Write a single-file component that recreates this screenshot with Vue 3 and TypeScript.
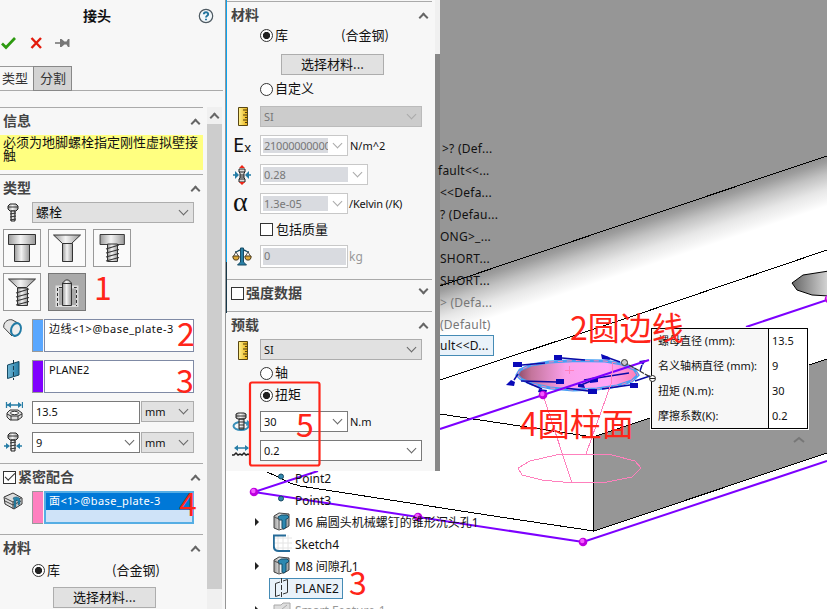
<script setup lang="ts">
interface TreeRow { text: string; dim?: boolean; selected?: boolean; shift?: number }
interface Feature { text: string; icon: string; arrow: boolean }
interface Mark { x: number; y: number; text: string }

const headKinds = ['flat', 'cone', 'flatThread', 'coneThread', 'anchor']

const parts: TreeRow[] = [
  { text: '>? (Def...', shift: 2 },
  { text: 'fault<<...', shift: -2 },
  { text: '<<Defa...' },
  { text: '? (Defau...' },
  { text: 'ONG>_...' },
  { text: 'SHORT...' },
  { text: 'SHORT...' },
  { text: '> (Defa...', dim: true },
  { text: '(Default)', dim: true },
  { text: 'ult<<D...', selected: true },
]

const features: Feature[] = [
  { text: 'Point2', icon: 'point', arrow: false },
  { text: 'Point3', icon: 'point', arrow: false },
  { text: 'M6 扁圆头机械螺钉的锥形沉头孔1', icon: 'hole', arrow: true },
  { text: 'Sketch4', icon: 'sketch', arrow: false },
  { text: 'M8 间隙孔1', icon: 'hole', arrow: true },
  { text: 'PLANE2', icon: 'plane', arrow: false },
  { text: 'Smart Feature-1', icon: 'smart', arrow: true },
]

const callout: [string, string][] = [
  ['螺母直径 (mm):', '13.5'],
  ['名义轴柄直径 (mm):', '9'],
  ['扭矩 (N.m):', '30'],
  ['摩擦系数(K):', '0.2'],
]

const marks: Mark[] = [
  { x: 94, y: 300, text: '1' },
  { x: 177, y: 346, text: '2' },
  { x: 176, y: 393, text: '3' },
  { x: 179, y: 516, text: '4' },
  { x: 296, y: 437, text: '5' },
  { x: 349, y: 595, text: '3' },
  { x: 570, y: 340, text: '2圆边线' },
  { x: 520, y: 436, text: '4圆柱面' },
]

const vertices: [number, number][] = [[254, 492], [418, 517], [583, 542], [543, 395], [829, 299]]
</script>

<template>
  <div class="app">
    <svg class="scene" width="827" height="609" viewBox="0 0 827 609">
      <defs>
        <linearGradient id="fillet" gradientUnits="userSpaceOnUse" x1="630" y1="222" x2="645" y2="267">
          <stop offset="0" stop-color="#929292" /><stop offset=".12" stop-color="#9e9e9e" />
          <stop offset=".35" stop-color="#c2c2c2" /><stop offset=".65" stop-color="#e6e6e6" />
          <stop offset="1" stop-color="#fff" />
        </linearGradient>
        <linearGradient id="pink"><stop offset="0" stop-color="#8c4a66" /><stop offset=".12" stop-color="#c4759c" /><stop offset=".4" stop-color="#fba0ea" /><stop offset=".75" stop-color="#ffa6f8" /><stop offset="1" stop-color="#ff7cb4" /></linearGradient>
        <linearGradient id="bore"><stop offset="0" stop-color="#666" /><stop offset="1" stop-color="#d8d8d8" /></linearGradient>
        <linearGradient id="metal"><stop offset="0" stop-color="#999" /><stop offset=".45" stop-color="#f4f4f4" /><stop offset="1" stop-color="#999" /></linearGradient>
        <linearGradient id="gold"><stop offset="0" stop-color="#fff394" /><stop offset="1" stop-color="#e8ae10" /></linearGradient>
        <linearGradient id="teal"><stop offset="0" stop-color="#71b7d5" /><stop offset="1" stop-color="#247ca5" /></linearGradient>
      </defs>
      <rect width="827" height="609" fill="#fff" />
      <path d="M440 0H827V156L440 286Z" fill="#969696" />
      <path d="M440 286L827 156V250L440 380Z" fill="url(#fillet)" />
      <path d="M593 437L827 359V453L594 531Z" fill="#969696" />
      <g fill="none" stroke="#000" shape-rendering="crispEdges">
        <path d="M440 286L630 222L827 156M440 380L630 317L827 250M440 414L593 437L827 359M593 437L594 531L827 453M267 472L276 476L290 483L300 486L500 517L594 531" />
        <path d="M593.500 437V531" />
      </g>
      <path d="M829 271L803 275L792 283L797 290L812 295L829 296Z" fill="url(#bore)" stroke="#000" />
      <path d="M517 375L520 370L531 365L549 362L577 360.500L605 361L622 364L634 369L638 375L632 381L617 386L597 389L573 390L550 388L532 384L521 379Z" fill="url(#pink)" stroke="#48a0f5" stroke-width="3" />
      <path d="M517 375L520 370L531 365L549 362L577 360.500L605 361L622 364L634 369L638 375L632 381L617 386L597 389L573 390L550 388L532 384L521 379Z" fill="none" stroke="#ff80b8" stroke-dasharray="5 4" />
      <g stroke="#0a0aa6" stroke-width="1.500" fill="#0909b8">
        <path d="M522 365L545 363M562 358L585 360M606 357L620 362M521 381L557 382M584 380L629 373M542 389L526 382M588 391L566 388M630 385L602 389M514 380L518 374M581 385L598 378M642 365L640 371M635 381L650 376" />
        <path d="M513 362h9v5h-9zM554 355h8v5h-8zM601 354l8 3 1 3-8-1zM556 379h8v5h-8zM590 378l8-1v5l-8 1zM511 380l-5 5 8 1 1-4zM588 389h9v5h-9zM539 389l8 1-1 4-8-2zM630 383h8v5h-8zM578 383l6 2 1 3-7-1zM639 361l7-1-3 5z" stroke="none" />
      </g>
      <g fill="none" stroke="#7d00ff" stroke-width="2">
        <path d="M318 471L254 492L418 517L583 542L827 461M440 429L543 395L649 360M746 327L827 300" />
      </g>
      <g fill="none" stroke="#ff80bd" shape-rendering="crispEdges">
        <path d="M543 395L572 483M613 363L611 384L586 454M569 366v8M565 370h9" />
        <path d="M518 468L530 461L556 455L580 454L612 455L635 461L641 468L632 477L607 482L573 483L542 480L522 475Z" />
      </g>
      <g v-for="(v, i) in vertices" :key="i">
        <circle :cx="v[0]" :cy="v[1]" r="4.300" fill="#bd00df" /><circle :cx="v[0] - .7" :cy="v[1] - 1" r="2.200" fill="#f45cff" />
      </g>
      <path d="M624 362L652 378" stroke="#333" stroke-width="1.200" stroke-dasharray="5 1" />
      <circle cx="624.500" cy="362.500" r="3" fill="#ccc" stroke="#333" />
      <path d="M794 442l5-4 5 4" fill="none" stroke="#777" stroke-width="2" />
    </svg>

    <aside class="manager">
      <header class="head">
        <h1>接头</h1>
        <svg class="help" width="16" height="16" viewBox="0 0 16 16"><circle cx="8" cy="8" r="6.700" fill="#f2f7fa" stroke="#4d5961" stroke-width="1.200" /><path d="M5.800 6.200C5.900 3.500 10.200 3.500 10.200 6.200C10.200 7.700 8 7.700 8 9.500M8 10.800v1.500" fill="none" stroke="#22749e" stroke-width="1.900" /></svg>
      </header>
      <div class="actions">
        <svg width="16" height="14" viewBox="0 0 16 14"><path d="M2 7.500L6 11.500L15 2" fill="none" stroke="#2d9a10" stroke-width="2.700" /></svg>
        <svg width="14" height="14" viewBox="0 0 14 14"><path d="M1.500 2L11 12M11 2L1.500 12" stroke="#e31b0c" stroke-width="2.400" /></svg>
        <svg width="16" height="14" viewBox="0 0 16 14"><path d="M0 7h7" stroke="#777" stroke-width="1.600" /><path d="M5 3h1.500l3 2.500h2L13 3h1.500v8H13l-1.500-2.500h-2l-3 2.500H5z" fill="#777" /></svg>
      </div>
      <nav class="tabs"><span class="current">类型</span><span class="other">分割</span></nav>

      <div class="scroller">
        <div class="sections">
          <section>
            <div class="title"><b>信息</b><i class="chev up"></i></div>
            <p class="notice">必须为地脚螺栓指定刚性虚拟壁接触</p>
          </section>

          <section>
            <div class="title"><b>类型</b><i class="chev up"></i></div>
            <div class="row r22">
              <svg class="ic bolt" width="14" height="20" viewBox="0 0 14 20"><path d="M2 3l2-2h6l2 2v3l-2 2H4L2 6z" fill="url(#metal)" stroke="#222" /><path d="M5 8h4v10H5z" fill="url(#metal)" stroke="#222" /><path d="M2 4h10M4 11l6-1M4 14l6-1M4 17l6-1" stroke="#333" /></svg>
              <div class="combo w162 cn"><span>螺栓</span><i class="chev down"></i></div>
            </div>
            <div class="heads">
              <div v-for="k in headKinds" :key="k" :class="['headbtn', { picked: k === 'anchor' }]">
                <svg width="36" height="36" viewBox="0 0 36 36" stroke="#333" fill="url(#metal)">
                  <path v-if="k.startsWith('flat')" d="M4.500 4.500h27v10h-27z" :transform="k === 'flatThread' ? 'translate(2 0) scale(.9 1)' : ''" />
                  <path v-if="k.startsWith('cone')" d="M4.500 5h27l-9 8.500h-9z" />
                  <path v-if="k === 'flat'" d="M10.500 14.500h15v17h-15z" />
                  <path v-if="k === 'cone'" d="M13.500 13.500h10v18h-10z" />
                  <g v-if="k.endsWith('Thread')"><path d="M13.500 14h10v17.500h-10z" /><path d="M12 19l13-4M12 23l13-3.500M12 27l13-3.500M12 31l13-3.500" fill="none" stroke-width="1.200" /></g>
                  <g v-if="k === 'anchor'"><path d="M8 31.500V13h20v18.500z" fill="#ddd" stroke="#ddd" stroke-width="3" /><path d="M10 31V14.500h17V31z" fill="#aaa" stroke="none" /><path d="M8.500 32V13.500h19V32" fill="none" stroke-dasharray="3 2" /><path d="M13.500 31.500V9l3-3h3l3 3v22.500z" /><path d="M13.500 9.500h9" /></g>
                </svg>
              </div>
            </div>
            <div class="row pick first">
              <svg class="ic" width="20" height="20" viewBox="0 0 20 20"><path d="M14 3.500L9 .8C4 0 0 4 .8 8.500L9 17z" fill="#e4e4e4" stroke="#444" /><ellipse cx="13" cy="10.500" rx="4.800" ry="6.500" transform="rotate(18 13 10.500)" fill="#eee" stroke="#227ba5" stroke-width="2" /></svg>
              <span class="swatch blue"></span><div class="field sel">边线&lt;1&gt;@base_plate-3</div>
            </div>
            <div class="row pick">
              <svg class="ic" width="20" height="20" viewBox="0 0 20 20"><path d="M4.500 5L16 1.500V15L4.500 18.500z" fill="url(#teal)" stroke="#174a63" /><path d="M10.500 0v20" stroke="#15394b" stroke-dasharray="4 2" /></svg>
              <span class="swatch violet"></span><div class="field">PLANE2</div>
            </div>
            <div class="row dim first">
              <svg class="ic" width="20" height="20" viewBox="0 0 20 20"><path d="M4 4h14M3.500 1v6M19.500 1v6" stroke="#277da6" stroke-width="1.300" /><path d="M4 4l4-3v6zM19 4l-4-3v6z" fill="#277da6" /><path d="M4 12l3-3h8l4 3v4l-4 3H7l-3-3z" fill="#ddd" stroke="#333" /><path d="M4 13l4 2h7l4-2M8 15v4M15 15v4" fill="none" stroke="#333" /><ellipse cx="11.500" cy="12" rx="4" ry="1.700" fill="#fff" stroke="#333" /></svg>
              <div class="input w108">13.5</div><div class="combo w53">mm<i class="chev down"></i></div>
            </div>
            <div class="row dim">
              <svg class="ic" width="20" height="20" viewBox="0 0 20 20"><path d="M5 3l2-2h6l2 2v3l-2 2H7L5 6zM8 8h4v11H8z" fill="url(#metal)" stroke="#222" /><path d="M5 4h10M7 11l6-1M7 14l6-1M7 17l6-1" stroke="#333" /><path d="M1 14h4M15 14h4" stroke="#277da6" stroke-width="1.500" /><path d="M7 14l-4-3v6zM13 14l4-3v6z" fill="#277da6" /></svg>
              <div class="input w108 list">9<i class="chev down"></i></div><div class="combo w53">mm<i class="chev down"></i></div>
            </div>
          </section>

          <section class="fit">
            <div class="title"><span class="check on"></span><b>紧密配合</b><i class="chev up"></i></div>
            <div class="row pick">
              <svg class="ic" width="20" height="20" viewBox="0 0 20 20"><path d="M1 6l9-4 9 5v6l-8 5-9-5z" fill="#ddd" stroke="#333" /><path d="M2 7l8 4 8-4M2 10l8 4 8-4M10 11v7" fill="none" stroke="#444" /><path d="M10 7c3-2 7-1 7 2v4l-2 1v-4l-2-1v7l-2 1v-8z" fill="#2b86ac" stroke="#174a63" stroke-width=".5" /></svg>
              <span class="swatch pink"></span><div class="field hot"><span>面&lt;1&gt;@base_plate-3</span></div>
            </div>
          </section>

          <section>
            <div class="title"><b>材料</b><i class="chev up"></i></div>
            <div class="row lib cn"><span class="radio on"></span><span>库</span><em>(合金钢)</em></div>
            <div class="button cn"><span>选择材料...</span></div>
          </section>
        </div>
        <div class="scrollbar"><div class="sb-arrow"><i class="chev up"></i></div><div class="sb-thumb"></div></div>
      </div>
    </aside>

    <main class="right">
      <div class="upper">
        <aside class="props">
          <div class="edge"><span class="e1"></span><span class="e2"></span></div>
          <div class="body">
            <section class="mat">
              <div class="title"><b>材料</b><i class="chev up"></i></div>
              <div class="row lib cn"><span class="radio on"></span><span>库</span><em>(合金钢)</em></div>
              <div class="button cn"><span>选择材料...</span></div>
              <div class="row radio-row cn"><span class="radio"></span><span>自定义</span></div>
              <div class="row line">
                <svg class="ic ruler" width="10" height="19" viewBox="0 0 10 19"><path d="M.5.500h9v18h-9z" fill="url(#gold)" stroke="#594713" /><path d="M5 3h4M7 5.500h2M5 8h4M7 10.500h2M5 13h4M7 15.500h2" stroke="#4e3d10" /></svg>
                <div class="combo w162 off">SI<i class="chev down"></i></div>
              </div>
              <div class="row line"><span class="sym">E<small>x</small></span><div class="input w88 off list"><span class="tight">21000000000</span><i class="chev down"></i></div><span class="unit">N/m^2</span></div>
              <div class="row line">
                <svg class="ic" width="20" height="20" viewBox="0 0 20 20"><path d="M7 4h6v3l-1 1v5l1 1v3H7v-3l1-1V8L7 7z" fill="#ddd" stroke="#222" /><path d="M7 7h6M8 10h4M8 12h4M7 14h6" stroke="#222" /><path d="M10 0l3 3H7zM10 20l3-3H7z" fill="#ef2415" /><path d="M1 10h3M19 10h-3" stroke="#227ba5" stroke-width="1.500" /><path d="M3 6l4 4-4 4zM17 6l-4 4 4 4z" fill="#227ba5" /></svg>
                <div class="input w108 off list"><span>0.28</span><i class="chev down"></i></div>
              </div>
              <div class="row line"><span class="sym alpha">α</span><div class="input w88 off list"><span>1.3e-05</span><i class="chev down"></i></div><span class="unit kelvin">/Kelvin (/K)</span></div>
              <div class="row check-row cn"><span class="check"></span><span>包括质量</span></div>
              <div class="row mass">
                <svg class="ic" width="20" height="20" viewBox="0 0 20 20"><path d="M3 5c3 0 3-2 6-2h2c3 0 3 2 6 2" fill="none" stroke="#174a63" stroke-width="1.500" /><path d="M8.500 1h3v14l3 3H5.500l3-3z" fill="#287fa6" stroke="#174a63" /><path d="M4 5L1 10M4 5l3 5M16 5l-3 5M16 5l3 5" stroke="#333" stroke-width=".8" /><path d="M1 9h6v2l-1.500 2h-3L1 11zM13 9h6v2l-1.500 2h-3L13 11z" fill="#dba83a" stroke="#4d3a17" /></svg>
                <div class="input w88 off tall"><span>0</span></div><span class="kg">kg</span>
              </div>
            </section>
            <section class="strength"><div class="title"><span class="check"></span><b>强度数据</b><i class="chev down bold"></i></div></section>
            <section>
              <div class="title"><b>预载</b><i class="chev up"></i></div>
              <div class="row r22">
                <svg class="ic ruler" width="10" height="19" viewBox="0 0 10 19"><path d="M.5.500h9v18h-9z" fill="url(#gold)" stroke="#594713" /><path d="M5 3h4M7 5.500h2M5 8h4M7 10.500h2M5 13h4M7 15.500h2" stroke="#4e3d10" /></svg>
                <div class="combo w162">SI<i class="chev down"></i></div>
              </div>
              <div class="row force cn"><span class="radio"></span><span>轴</span></div>
              <div class="row force cn"><span class="radio on"></span><span>扭矩</span></div>
              <div class="row torque">
                <svg class="ic" width="20" height="20" viewBox="0 0 20 20"><ellipse cx="9" cy="14" rx="7.500" ry="4" fill="none" stroke="#398fb8" stroke-width="2" /><path d="M4 2l2-1h6l2 1v4l-2 1H6L4 6zM7 7h5v10H7z" fill="url(#metal)" stroke="#222" /><path d="M4 4h10M7 10h5M7 13h5M7 16h5" stroke="#333" /><path d="M15 8l4 3-5 3z" fill="#398fb8" /></svg>
                <div class="input w88 list">30<i class="chev down"></i></div><span class="unit">N.m</span>
              </div>
              <div class="row line">
                <svg class="ic" width="20" height="20" viewBox="0 0 20 20"><path d="M4 7h12" stroke="#277da6" stroke-width="1.500" /><path d="M2 7l4-3v6zM17 7l-4-3v6z" fill="#277da6" /><path d="M0 14h2l2-2 2 2 2-1 2 1 2-2 2 2 2-1 2 1" fill="none" stroke="#222" stroke-width="1.500" /></svg>
                <div class="input w162 list">0.2<i class="chev down"></i></div>
              </div>
            </section>
          </div>
          <div class="thin"></div>
        </aside>
        <ul class="parts">
          <li v-for="(p, i) in parts" :key="i" :class="{ faded: p.dim, selected: p.selected }"><span :style="{ marginLeft: (p.shift ?? 0) + 'px' }">{{ p.text }}</span></li>
        </ul>
      </div>
      <ul class="features">
        <li v-for="f in features" :key="f.text" :class="f.icon">
          <i class="tri" :class="{ shown: f.arrow }"></i>
          <span class="entry">
            <svg v-if="f.icon === 'point'" width="18" height="20" viewBox="0 0 18 20"><circle cx="8" cy="8.500" r="2.500" fill="#3187ad" stroke="#174a63" /></svg>
            <svg v-else-if="f.icon === 'hole'" width="18" height="20" viewBox="0 0 18 20"><path d="M1 4l5-3 10 1v12l-5 3H9l-3 1-5-2z" fill="url(#metal)" stroke="#444" /><path d="M5 5l3-2h6l2 2-2 2h-1v8l-2 2-2-1V8H6z" fill="#2c88b0" stroke="#164e69" /><path d="M1 5l5 2v10" fill="none" stroke="#555" /></svg>
            <svg v-else-if="f.icon === 'sketch'" width="20" height="20" viewBox="0 0 20 20"><path d="M1 4h18M1 9h18M1 14h18M5 1v17M10 1v17M15 1v17" stroke="#e4e4e4" /><path d="M13 1.500H.800V12q0 5 5 5H17" fill="none" stroke="#256b98" stroke-width="2" /></svg>
            <svg v-else width="18" height="20" viewBox="0 0 18 20"><g v-if="f.icon === 'plane'" fill="none" stroke="#333"><path d="M7 4L2.500 5.500V18.500L7 17M10 3L14.500 1.500V14.500L10 16" /><path d="M8.500 0v20" stroke-dasharray="5 2" /></g><g v-else stroke="#aaa" fill="#ddd"><path d="M1 5h7l2-2h7v14H1z" /><path d="M3 14L14 5M8 15l7-6" /></g></svg>
            <span>{{ f.text }}</span>
          </span>
        </li>
      </ul>
    </main>

    <table class="callout">
      <tbody><tr v-for="c in callout" :key="c[0]"><th>{{ c[0] }}</th><td>{{ c[1] }}</td></tr></tbody>
    </table>

    <svg class="scene" width="827" height="609" viewBox="0 0 827 609">
      <circle cx="652.500" cy="378.500" r="3" fill="#fff" stroke="#222" /><path d="M650 378.500h5" stroke="#222" />
      <rect x="250" y="382.500" width="69.500" height="83" rx="2" fill="none" stroke="#ff2519" stroke-width="2.200" />
      <text v-for="(m, i) in marks" :key="i" class="mark" :x="m.x" :y="m.y">{{ m.text }}</text>
    </svg>
  </div>
</template>

<style>
html, body { margin: 0; overflow: hidden; }
</style>

<style scoped>
* { box-sizing: border-box; }
.app { position: relative; display: flex; width: 827px; height: 609px; overflow: hidden; font: 11px/14px "Noto Sans", "Noto Sans CJK SC", sans-serif; color: #111; }
.scene { position: absolute; left: 0; top: 0; }
.mark { font: 32px "Noto Sans CJK SC", sans-serif; fill: #ff2519; }
.cn { font-size: 13px; font-family: "Noto Sans CJK SC", sans-serif; }
.cn > span:not(.radio):not(.check), .cn > em { padding-bottom: 2px; }

.manager { position: relative; flex: none; display: flex; flex-direction: column; width: 226px; height: 609px; background: #f7f7f7; border-right: 1px solid #969696; overflow: hidden; }
.head { display: flex; align-items: center; height: 32px; padding-left: 83px; }
.head h1 { margin: 0; width: 115px; padding-bottom: 2px; font: bold 14px/20px "Noto Sans CJK SC", sans-serif; }
.actions { display: flex; align-items: center; height: 22px; gap: 13px; }
.actions svg:first-child { margin-right: 1px; }
.actions svg + svg + svg { margin-left: -2px; }
.tabs { display: flex; height: 25px; margin-top: 12px; margin-right: 2px; border-bottom: 1px solid #aaa; font: 13px/21px "Noto Sans CJK SC", sans-serif; color: #333; }
.tabs .current { width: 33px; padding-left: 2px; border-top: 1px solid #999; }
.tabs .other { width: 39px; padding-left: 6px; height: 25px; border: 1px solid #888; background: #d3d3d3; }
.scroller { display: flex; flex: none; height: 502px; margin-top: 16px; }
.sections { width: 207px; padding-right: 4px; overflow: hidden; }
section { border-top: 1px solid #aaa; }
.title { display: flex; align-items: center; height: 27px; padding: 0 3px; color: #444; font: 14px/20px "Noto Sans CJK SC", sans-serif; }
.title b { padding-bottom: 3px; }
.title .chev { margin-left: auto; margin-right: 1px; }
.title .check { margin-right: 2px; }
.notice { margin: 0 0 4px; height: 35px; padding: 0 3px; background: #ffff80; font: 13px/13px "Noto Sans CJK SC", sans-serif; }
.row { display: flex; align-items: center; }
.r22 { height: 22px; }
.r22 .combo { margin-top: -1px; }
.ic { flex: none; width: 20px; margin-left: 3px; margin-right: 9px; }
.chev { flex: none; width: 7px; height: 7px; border: solid #666; border-width: 2px 0 0 2px; transform: translateY(2px) rotate(45deg); margin: 0 2px; }
.chev.down { transform: translateY(-2px) rotate(225deg); border-width: 1.200px 0 0 1.200px; }
.title .chev.bold { border-width: 2px 0 0 2px; transform: translateY(-4px) rotate(225deg); }
.combo, .input { flex: none; display: flex; align-items: center; height: 21px; padding: 0 4px 0 3px; border: 1px solid #adadad; background: #e1e1e1; white-space: nowrap; }
.combo .chev, .input .chev { margin-left: auto; }
.input { background: #fff; border-color: #7a7a7a; }
.w162 { width: 162px; }
.w108 { width: 108px; }
.w88 { width: 88px; }
.w53 { width: 53px; margin-left: 1px; }
.heads { display: grid; grid-template-columns: repeat(3, 38px); gap: 6px 7px; padding: 5px 3px 0; }
.headbtn { height: 38px; border: 1px solid #999; background: #fafafa; }
.headbtn.picked { background: #aaa; border-color: #777; }
.headbtn svg { display: block; }
.pick { height: 33px; margin-bottom: 8px; align-items: stretch; }
.pick.first { margin-top: 8px; }
.swatch { width: 11px; border: 1px solid #999; border-right: 0; margin-right: 1px; }
.blue { background: #59a7ff; }
.violet { background: #8000ff; }
.pink { background: #ff80c0; }
.field { width: 150px; padding: 2px 4px; border: 1px solid #7f8aa5; background: #fff; white-space: nowrap; }
.field.sel { letter-spacing: .5px; }
.field.hot { padding: 0; border: 2px solid #56aee4; background: #cfe3f8; color: #fff; letter-spacing: .4px; }
.hot span { display: block; height: 17px; padding: 0 3px; background: #0078d7; line-height: 16px; }
.dim { height: 23px; margin-bottom: 8px; align-items: flex-start; }
.dim.first .w108 { height: 23px; padding-bottom: 2px; }
.fit { height: 71px; }
.check { flex: none; display: block; width: 13px; height: 13px; border: 1px solid #333; background: #fff; }
.check.on::after { content: ""; display: block; width: 9px; height: 4px; margin: 1px; border: solid #333; border-width: 0 0 1.200px 1.200px; transform: rotate(-45deg); }
.radio { flex: none; width: 13px; height: 13px; margin-right: 2px; border: 1px solid #333; border-radius: 50%; background: #fff; }
.radio.on { background: radial-gradient(circle, #222 0 3.200px, #fff 4px); }
.lib { height: 17px; padding-left: 32px; }
.lib em { font-style: normal; margin-left: 52px; }
.button { display: flex; align-items: center; justify-content: center; width: 103px; height: 21px; margin: 8px 0 0 53px; border: 1px solid #adadad; background: #e1e1e1; }
.scrollbar { width: 15px; height: 502px; background: #f0f0f0; }
.sb-arrow { height: 17px; display: flex; align-items: center; justify-content: center; }
.sb-thumb { height: 465px; background: #cdcdcd; }

.right { position: relative; flex: none; width: 601px; height: 609px; overflow: hidden; }
.upper { display: flex; height: 471px; }
.props { display: flex; width: 214px; height: 471px; background: #f7f7f7; }
.edge { display: flex; flex-direction: column; width: 1px; }
.e1 { height: 262px; background: #0ba3ef; }
.e2 { height: 51px; background: #17394a; }
.body { width: 208px; padding: 1px 3px 0 0; }
.thin { width: 5px; background: linear-gradient(#f0f0f0 54px, #888 54px); }
.body .title { padding-left: 4px; }
.body .title .chev { margin-right: 2px; }
.mat { height: 278px; }
.body .lib { padding-left: 33px; height: 15px; margin-top: -1px; }
.body .lib em { margin-left: 53px; }
.body .button { margin-left: 54px; margin-top: 11px; }
.radio-row { height: 20px; padding-left: 33px; margin: 4px 0 7px; }
.line { height: 21px; margin-bottom: 8px; }
.body .ic { margin-left: 5px; margin-right: 8px; }
.ic.bolt { width: 14px; margin: 0 12px 0 6px; }
.body .ic.ruler { width: 10px; margin: 0 12px 0 11px; }
.sym { width: 27px; margin-left: 6px; font: 20px/20px "Noto Sans", sans-serif; }
.sym small { font-size: 13px; }
.alpha { font: 28px/20px "Liberation Serif", serif; padding-bottom: 3px; }
.unit { margin-left: 2px; }
.kelvin { margin-left: 1px; letter-spacing: -.2px; }
.off { color: #777; border-color: #c8c8c8; }
.combo.off { background: #ccc; border-color: #bbb; }
.off .chev { border-color: #aaa; }
.input.off { padding-left: 2px; }
.input.off span { flex: 1; height: 15px; padding-left: 1px; background: #d9dbe0; line-height: 15px; overflow: hidden; margin-right: 6px; }
.input.off .tight { letter-spacing: -.25px; }
.input.off.tall span { margin-right: -3px; height: 17px; }
.check-row { height: 16px; padding-left: 33px; }
.check-row .check { margin: -1px 3px 0 0; }
.mass { height: 23px; margin-top: 7px; }
.mass .tall { height: 23px; }
.kg { color: #999; font-size: 12px; margin-left: 1px; }
.strength { height: 32px; }
.force { height: 22px; padding-left: 33px; }
.row.force:nth-child(3) { margin-top: 1px; }
.torque { height: 21px; margin: 5px 0 8px; }

.parts, .features { list-style: none; margin: 0; padding: 0; white-space: nowrap; }
.parts { padding-top: 138px; font-size: 12px; letter-spacing: .25px; }
.parts li { height: 22px; line-height: 22px; }
.parts .faded { color: #777; }
.parts .selected { width: 54px; height: 21px; margin-top: -1px; line-height: 20px; border: 1px solid #458bb5; border-left: 0; background: #e9f2fa; }
.features { padding-left: 29px; font-size: 12px; margin-top: -4px; }
.features li { display: flex; align-items: center; height: 22px; }
.tri { width: 4px; height: 0; margin-right: 10px; border: solid transparent; border-width: 4px 0 4px 4px; }
.tri.shown { border-left-color: #222; }
.entry { display: flex; align-items: center; height: 21px; padding: 0 3px; border: 1px solid transparent; }
.entry svg { margin-right: 4px; }
.entry span { padding-top: 1px; }
.sketch .entry svg { margin-right: 2px; }
.plane .entry { border-color: #458bb5; background: #e9f2fa; }
.smart { color: #999; }

.callout { position: absolute; left: 651px; top: 328px; width: 157px; height: 101px; border: 1px solid #000; border-collapse: separate; border-spacing: 0; background: #fff; outline: 1px solid #fff; }
.callout th { width: 117px; padding: 0 0 0 6px; border-right: 1px solid #000; background: #f7f7f7; font-weight: normal; text-align: left; white-space: nowrap; }
.callout td { padding: 0 3px; }
</style>
